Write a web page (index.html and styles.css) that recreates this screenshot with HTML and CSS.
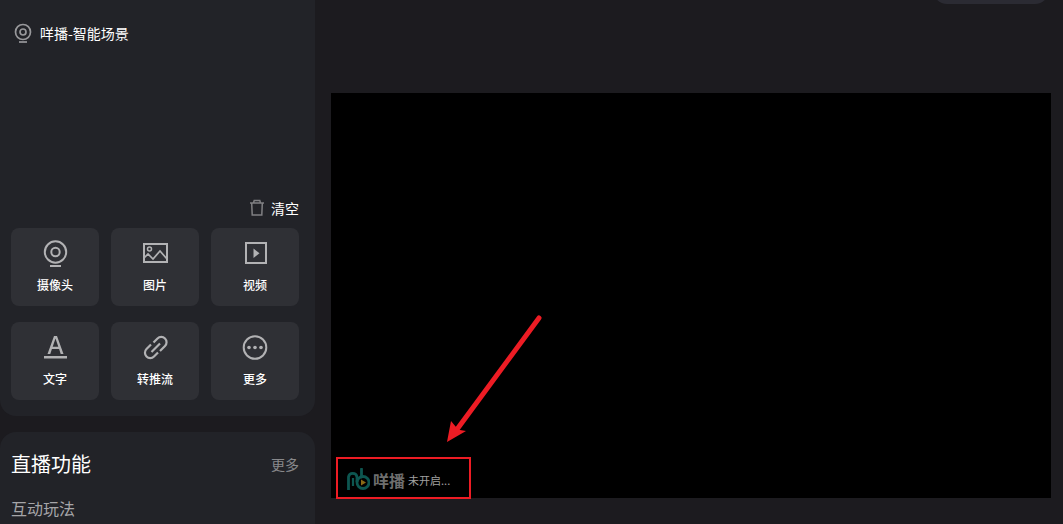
FILE: index.html
```html
<!DOCTYPE html>
<html lang="zh-CN">
<head>
    <meta charset="UTF-8">
    <meta name="viewport" content="width=device-width, initial-scale=1.0">
    <title>咩播</title>
    <link rel="stylesheet" href="styles.css">
</head>
<body>

<aside class="sidebar">
    <section class="panel">
        <ul class="source-list">
            <li class="source">
                <svg class="source-icon" viewBox="0 0 18 20" fill="none" stroke="currentColor" stroke-width="1.7">
                    <circle cx="9" cy="9" r="7.5"/>
                    <circle cx="9" cy="9" r="3"/>
                    <path d="M5 19h8"/>
                </svg>
                咩播-智能场景
            </li>
        </ul>

        <button class="clear" type="button">
            <svg class="clear-icon" viewBox="0 0 16 18" fill="none" stroke="currentColor" stroke-width="1.5">
                <path d="M1 4h14M4.5 4l.7-2.500h5.600l.7 2.500M2.700 4l.5 12h9.600l.5-12"/>
            </svg>
            清空
        </button>

        <div class="tools">
            <button class="tool" type="button">
                <svg class="tool-icon" viewBox="0 0 28 28" fill="none" stroke="currentColor" stroke-width="2">
                    <circle cx="14.5" cy="12" r="10.7"/>
                    <circle cx="14.5" cy="12" r="4.2"/>
                    <path d="M9 26h11"/>
                </svg>
                摄像头
            </button>
            <button class="tool" type="button">
                <svg class="tool-icon" viewBox="0 0 28 28" fill="none" stroke="currentColor" stroke-width="2">
                    <path d="M3 4h23v18H3z"/>
                    <circle cx="8.5" cy="9" r="2" stroke-width="1.5"/>
                    <path d="M3 18l4-4 5 5 7-8 7 8" stroke-width="1.7"/>
                </svg>
                图片
            </button>
            <button class="tool" type="button">
                <svg class="tool-icon" viewBox="0 0 28 28" fill="none" stroke="currentColor" stroke-width="2">
                    <path d="M5 3h20v20H5z"/>
                    <path d="M12.5 8.5v9.500l6-4.700z" fill="currentColor" stroke="none"/>
                </svg>
                视频
            </button>
            <button class="tool" type="button">
                <svg class="tool-icon" viewBox="0 0 28 28" fill="currentColor">
                    <path fill-rule="evenodd" d="M6.500 20L13 2h3l6.500 18h-2.800l-1.600-5h-7.200l-1.600 5zM11.700 12.700h5.600L14.500 4.600z"/>
                    <path d="M3 22h23v2.500H3z"/>
                </svg>
                文字
            </button>
            <button class="tool" type="button">
                <svg class="tool-icon" viewBox="0 0 28 28" fill="none" stroke="currentColor" stroke-width="2.2">
                    <path d="M12.500 8.500l4-4a5.200 5.200 0 0 1 7.500 7.500L19 17M17 18.500l-4 4A5.200 5.200 0 0 1 5.500 15L10 10.500M10.500 18l8.500-8.500"/>
                </svg>
                转推流
            </button>
            <button class="tool" type="button">
                <svg class="tool-icon" viewBox="0 0 28 28" fill="none" stroke="currentColor" stroke-width="2">
                    <circle cx="14" cy="13.5" r="11.3"/>
                    <g fill="currentColor" stroke="none">
                        <circle cx="8" cy="13.5" r="1.8"/>
                        <circle cx="14" cy="13.5" r="1.8"/>
                        <circle cx="20" cy="13.5" r="1.8"/>
                    </g>
                </svg>
                更多
            </button>
        </div>
    </section>

    <section class="panel panel-live">
        <div class="panel-head">
            <h2>直播功能</h2>
            <a class="more" href="#">更多</a>
        </div>
        <h3>互动玩法</h3>
    </section>
</aside>

<main class="main">
    <div class="topbar">
        <div class="pill"></div>
    </div>

    <div class="stage">
        <svg class="arrow" viewBox="0 0 100 130">
            <path d="M93 5L12 115" stroke="currentColor" stroke-width="5" stroke-linecap="round"/>
            <path d="M1 129L5 108l5 6 4 3 6 1z" fill="currentColor"/>
        </svg>

        <div class="watermark">
            <svg class="logo" viewBox="0 0 24 24" fill="none" stroke="#0d5650" stroke-width="2.8">
                <path d="M2.500 22V9a4.300 4.300 0 0 1 8.500 0v5"/>
                <path d="M7 10v8" stroke-width="2.2"/>
                <path d="M15.500 1v8" stroke-linecap="round"/>
                <circle cx="17" cy="14.5" r="6"/>
                <path d="M15 11.500v6l5-3z" fill="#8a6a16" stroke="none"/>
            </svg>
            <span class="brand">咩播</span>
            <span class="status">未开启...</span>
        </div>
    </div>
</main>

</body>
</html>
```

FILE: styles.css
```css
* {
    box-sizing: border-box;
}

body {
    display: flex;
    height: 100vh;
    margin: 0;
    overflow: hidden;
    background-color: #1c1b1f;
    color: #fff;
    font-family: "Noto Sans CJK SC", sans-serif;
    font-size: 14px;
    line-height: 20px;
}

button {
    padding: 0;
    border: none;
    background: none;
    color: inherit;
    font: inherit;
    cursor: pointer;
}

svg {
    display: block;
    flex: none;
}

/* Sidebar */
.sidebar {
    display: flex;
    flex: none;
    flex-direction: column;
    gap: 16px;
    width: 315px;
}

.panel {
    display: flex;
    flex: none;
    flex-direction: column;
    padding: 0 16px 16px 11px;
    border-radius: 0 0 16px 16px;
    background-color: #222328;
}

.source-list {
    min-height: 198px;
    margin: 0;
    padding: 23px 0 0;
    list-style: none;
}

.source {
    display: flex;
    align-items: center;
    gap: 8px;
    padding-left: 3px;
}

.source-icon {
    width: 18px;
    height: 20px;
    color: #98989b;
}

.clear {
    display: flex;
    align-items: center;
    align-self: flex-end;
    gap: 6px;
    margin-bottom: 10px;
}

.clear-icon {
    width: 16px;
    height: 18px;
    color: #808083;
}

.tools {
    display: grid;
    grid-template-columns: repeat(3, 1fr);
    gap: 16px 12px;
}

.tool {
    display: flex;
    flex-direction: column;
    align-items: center;
    gap: 8px;
    padding: 12px 0;
    border-radius: 8px;
    background-color: #2f3035;
    font-size: 12px;
    font-weight: 500;
    line-height: 18px;
}

.tool-icon {
    width: 28px;
    height: 28px;
    color: #b2b2b4;
}

.panel-live {
    flex: 1 0 auto;
    padding-top: 18px;
    border-radius: 16px 16px 0 0;
}

.panel-head {
    display: flex;
    align-items: center;
    justify-content: space-between;
    margin-bottom: 18px;
}

h2,
h3 {
    margin: 0;
    font-weight: 400;
}

h2 {
    font-size: 20px;
    line-height: 28px;
}

h3 {
    color: #a5a5a8;
    font-size: 16px;
    line-height: 24px;
}

.more {
    color: #88888b;
    text-decoration: none;
}

/* Preview */
.main {
    flex: 1;
    padding: 0 12px 0 16px;
}

.topbar {
    display: flex;
    justify-content: flex-end;
    height: 93px;
    padding-right: 2px;
}

.pill {
    width: 116px;
    height: 28px;
    margin-top: -24px;
    border-radius: 14px;
    background-color: #2b2b33;
}

.stage {
    position: relative;
    aspect-ratio: 16 / 9;
    background-color: #000;
}

.arrow {
    position: absolute;
    bottom: 55px;
    left: 115px;
    width: 100px;
    height: 130px;
    color: #ed1c24;
}

.watermark {
    position: absolute;
    bottom: -1px;
    left: 5px;
    display: flex;
    align-items: center;
    gap: 3px;
    height: 42px;
    padding: 3px 19px 0 8px;
    border: 2px solid #ed1c24;
    white-space: nowrap;
}

.logo {
    width: 24px;
    height: 24px;
}

.brand {
    color: #6e6e6e;
    font-size: 16px;
    font-weight: 700;
}

.status {
    color: #a0a0a0;
    font-size: 11px;
}
```
